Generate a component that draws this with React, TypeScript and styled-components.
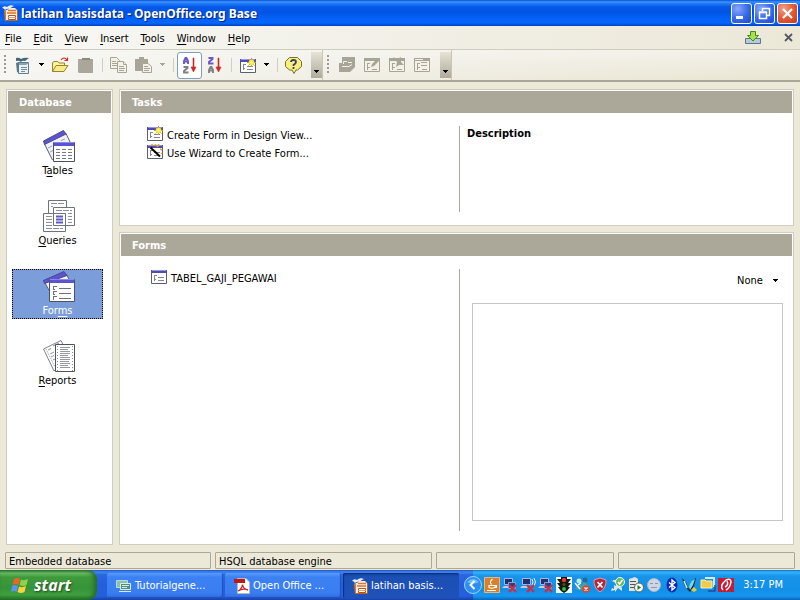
import React from "react";
import styled, { createGlobalStyle, css } from "styled-components";

const ui = `"DejaVu Sans Condensed", "Noto Sans", sans-serif`;

const Global = createGlobalStyle`
  * { box-sizing: border-box; }
  body { margin: 0; font-family: ${ui}; font-size: 11px; line-height: 14px; color: #000; background: #ece9d8; }
  button, select { font: inherit; color: inherit; border: 0; background: none; padding: 0; margin: 0; }
  u { text-underline-offset: 2px; }
  svg { display: block; flex: none; }
`;

/* ---------- layout ---------- */

const Screen = styled.div`
  min-height: 100vh;
  display: flex;
  flex-direction: column;
  background: #ece9d8;
`;

const TitleBar = styled.header`
  display: flex;
  align-items: center;
  height: 26px;
  padding: 0 2px;
  gap: 3px;
  background: linear-gradient(#0a52d8 0, #3a93ff 2px, #1c76f6 4px, #0558e8 7px, #0054e3 12px, #0463fa 19px, #0466fb 23px, #0040c0 26px);
`;

const Title = styled.h1`
  flex: 1;
  margin: 0;
  font-family: "Noto Sans", sans-serif;
  font-size: 12px;
  line-height: 20px;
  padding-top: 1px;
  font-weight: 700;
  color: #fff;
  text-shadow: 1px 1px 1px #0a1e7a;
  white-space: nowrap;
`;

const WindowButtons = styled.div`
  display: flex;
  gap: 2px;
`;

const WindowButton = styled.button<{ $close?: boolean }>`
  display: grid;
  place-items: center;
  width: 21px;
  height: 21px;
  border: 1px solid #fff;
  border-radius: 3px;
  background: ${(p) =>
    p.$close
      ? "radial-gradient(circle at 30% 25%, #f0a088, #e25b36 50%, #c13c14)"
      : "radial-gradient(circle at 30% 25%, #88a8f8, #3c6ce8 50%, #1c48d0)"};
`;

const MenuBar = styled.nav`
  display: flex;
  align-items: center;
  height: 24px;
  padding: 0 7px 0 5px;
  gap: 12px;
  border-bottom: 1px solid #cfccbe;
  background: linear-gradient(90deg, #f7f7f5, #ece8d8);
`;

const MenuItem = styled.button`
  padding-top: 2px;
  line-height: 18px;
`;

const MenuSpacer = styled.div`
  flex: 1;
`;

const IconButton = styled.button`
  display: grid;
  place-items: center;
  margin-left: 11px;
`;

const ToolBars = styled.div`
  display: flex;
  height: 32px;
  border-bottom: 2px solid #aaa798;
  background: linear-gradient(90deg, rgba(247, 247, 245, 0.9), rgba(236, 232, 216, 0)),
    linear-gradient(#f3f1e8, #e9e5d2);
`;

const ToolGroup = styled.div`
  display: flex;
  align-items: center;
  border-right: 1px solid #c9c6b6;
`;

const Grip = styled.div<{ $wide?: boolean }>`
  width: ${(p) => (p.$wide ? 12 : 10)}px;
  height: 20px;
  padding-left: 4px;

  &::before {
    content: "";
    display: block;
    width: 2px;
    height: 100%;
    background: repeating-linear-gradient(#9c998d 0 2px, transparent 2px 4px);
  }
`;

const Tool = styled.button<{ $active?: boolean }>`
  display: grid;
  place-items: center;
  width: 25px;
  height: 27px;
  ${(p) =>
    p.$active &&
    css`
      background: #fff;
      border: 1px solid #7f9dbd;
      border-radius: 3px;
    `}
`;

const ToolArrow = styled.button`
  display: grid;
  place-items: center;
  width: 13px;
  height: 27px;
`;

const Separator = styled.div`
  width: 1px;
  height: 14px;
  margin: 0 3px 0 4px;
  background: #d2cebf;
`;

const Overflow = styled.button`
  display: flex;
  align-items: flex-end;
  justify-content: center;
  width: 11px;
  height: 26px;
  margin-left: 5px;
  padding-bottom: 4px;
  background: linear-gradient(#e6e3d6, #aeab9c);
`;

const Workspace = styled.main`
  flex: 1;
  display: flex;
  gap: 6px;
  padding: 7px 6px 0 6px;
`;

const Panel = styled.section`
  display: flex;
  flex-direction: column;
  border: 1px solid #d0cdc0;
  padding: 1px;
  background: #fff;
`;

const Sidebar = styled(Panel)`
  width: 107px;
`;

const Column = styled.div`
  flex: 1;
  min-width: 0;
  display: grid;
  grid-template-rows: 137px 1fr;
  gap: 6px;
`;

const PanelTitle = styled.h2`
  margin: 0;
  padding: 2px 11px 0;
  font-size: 11px;
  line-height: 20px;
  font-weight: 700;
  color: #fff;
  background: #aca899;
`;

const Categories = styled.nav`
  display: flex;
  flex-direction: column;
  gap: 20px;
  padding: 16px 8px 0 4px;
`;

const Category = styled.button<{ $selected?: boolean }>`
  display: flex;
  flex-direction: column;
  align-items: center;
  justify-content: flex-end;
  gap: 2px;
  height: 50px;
  padding-left: 3px;
  border: 1px solid transparent;
  ${(p) =>
    p.$selected &&
    css`
      color: #fff;
      background: #7b9edb;
      border: 1px dotted #000;
    `}
`;

const CategoryLabel = styled.span`
  margin-right: 3px;
`;

const Split = styled.div`
  flex: 1;
  display: grid;
  grid-template-columns: 338fr 333fr;
  padding: 13px 0 12px;
`;

const ItemList = styled.div<{ $indent: number }>`
  display: flex;
  flex-direction: column;
  align-items: flex-start;
  padding-left: ${(p) => p.$indent}px;
`;

const Item = styled.button`
  display: flex;
  align-items: flex-start;
  gap: 4px;
  height: 18px;
  line-height: 19px;
  white-space: nowrap;
`;

const Detail = styled.div`
  display: flex;
  flex-direction: column;
  border-left: 1px solid #aca899;
  padding-left: 7px;
`;

const DetailTitle = styled.h3`
  margin: 0;
  font-size: 11px;
  line-height: 15px;
  font-weight: 700;
`;

const Preview = styled(Detail)`
  padding: 0 9px 10px 12px;
`;

const PreviewMode = styled.label`
  display: grid;
  align-self: flex-end;
  align-items: center;
  width: 46px;
  height: 24px;

  > * {
    grid-area: 1 / 1;
  }

  svg {
    justify-self: end;
    margin-right: 4px;
    pointer-events: none;
  }
`;

const ModeSelect = styled.select`
  appearance: none;
  width: 100%;
  background: transparent;
  outline: none;
`;

const PreviewBox = styled.div`
  flex: 1;
  margin-top: 10px;
  border: 1px solid #c6c6c6;
`;

const StatusBar = styled.footer`
  display: grid;
  grid-template-columns: 206fr 217fr 178fr 177fr;
  gap: 4px;
  padding: 7px 5px 1px;
`;

const StatusCell = styled.div`
  height: 17px;
  padding: 2px 3px 0;
  border: 1px solid #aca899;
  border-radius: 1px;
`;

const TaskBar = styled.nav`
  display: flex;
  height: 30px;
  background: linear-gradient(#1f4fc0 0, #3f86f2 2px, #2a66e0 5px, #245edb 15px, #2460dd 26px, #1941a5 30px);
`;

const StartButton = styled.button`
  display: flex;
  align-items: center;
  gap: 5px;
  width: 97px;
  padding-left: 11px;
  border-radius: 0 9px 9px 0;
  background: linear-gradient(#2d7a2d 0, #6fbf6a 3px, #3f9a3c 7px, #37933a 18px, #3fa03e 25px, #256f28 30px);
  box-shadow: inset -3px 0 5px #226b26;
`;

const StartLabel = styled.span`
  font-family: "Open Sans", sans-serif;
  font-size: 16px;
  line-height: 22px;
  font-style: italic;
  font-weight: 700;
  color: #fff;
  text-shadow: 1px 1px 2px #1c4a1c;
`;

const Tasks = styled.div`
  flex: 1;
  display: flex;
  gap: 2px;
  padding: 3px 10px 2px 10px;
`;

const Task = styled.button<{ $active?: boolean }>`
  flex: 0 1 116px;
  min-width: 0;
  display: flex;
  align-items: center;
  gap: 3px;
  padding-left: 9px;
  border-radius: 2px;
  color: #fff;
  white-space: nowrap;
  background: ${(p) =>
    p.$active
      ? "linear-gradient(#153f96, #1c4fb4 4px, #1e52b9)"
      : "linear-gradient(#5a9bff, #3c81f3 4px, #3a7df0 20px, #2f6de0)"};
  box-shadow: ${(p) => (p.$active ? "inset 1px 1px 1px #0f2f78" : "inset -1px -1px 1px #1d4fc0")};
`;

const Tray = styled.div`
  display: flex;
  align-items: center;
  gap: 2px;
  padding-right: 17px;
  color: #fff;
  background: linear-gradient(#0b6bc8 0, #34b4f6 2px, #1894ea 6px, #1290e8 20px, #1698f0 26px, #0c63b8 30px);
`;

const TrayToggle = styled.button`
  width: 18px;
  height: 18px;
  margin-left: -9px;
`;

const Clock = styled.time`
  margin-left: 7px;
`;

/* ---------- icons ---------- */

const Pic = ({ w = 16, h = w, children }: { w?: number; h?: number; children: React.ReactNode }) => (
  <svg width={w} height={h} viewBox={`0 0 ${w} ${h}`} aria-hidden="true">
    {children}
  </svg>
);

const Arrow = ({ color = "#000" }: { color?: string }) => (
  <Pic w={7} h={4}>
    <path d="M1 0H6V1H5V2H4V3H3V2H2V1H1Z" fill={color} />
  </Pic>
);

const BaseLogo = () => (
  <Pic>
    <path d="M0 3Q2 0 5 2Q8 -1 12 1Q9 2 8 4Q5 3 3 5Q2 3 0 3Z" fill="#e9eef6" />
    <path d="M2 6L9 3H13L15 5V16H4V8Z" fill="#fbeee0" />
    <path d="M2 6L4 5V16H3Z" fill="#d9772e" />
    <path d="M6 5.500H14M5 8H14" stroke="#d9772e" strokeWidth="1.500" />
    <path d="M6.500 10.500H13.500V14.500H6.500Z" fill="#fff" stroke="#b4551d" />
    <path d="M6 12.500H14" stroke="#e0a070" />
    <path d="M4 15.500H15.500V5" fill="none" stroke="#c06020" />
  </Pic>
);

const Minimize = () => (
  <Pic w={15}>
    <path d="M2 10H9V13H2Z" fill="#fff" />
  </Pic>
);
const Restore = () => (
  <Pic w={15}>
    <path d="M5.500 5V2.500H12.500V9.500H10M5 2.500H13M2.500 6.500H9.500V12.500H2.500ZM2 6H10" fill="none" stroke="#fff" strokeWidth="1.500" />
  </Pic>
);
const Close = () => (
  <Pic w={15}>
    <path d="M3 3L12 12M12 3L3 12" stroke="#fff" strokeWidth="2.200" />
  </Pic>
);

const Download = () => (
  <Pic w={16} h={13}>
    <path d="M0.500 7.500H15.500V12.500H0.500Z" fill="#b4cbd8" stroke="#5c7888" />
    <path d="M5.500 0.500H10.500V4.500H13.500L8 10L2.500 4.500H5.500Z" fill="#a8e04c" stroke="#3f8f1c" />
  </Pic>
);
const CloseDoc = () => (
  <Pic w={9}>
    <path d="M1 1L8 8M8 1L1 8" stroke="#555964" strokeWidth="1.800" />
  </Pic>
);

const NewDoc = () => (
  <Pic w={16} h={17}>
    <path d="M3.500 5.500H13.500V16.500H3.500Z" fill="#e9f2f6" stroke="#5d7f90" />
    <path d="M1 1Q4 0 6 2Q9 0 14 1L10 4Q7 3 6 5Q4 3 1 4Z" fill="#41687c" />
    <path d="M1 6L4 5V16L2 15Z" fill="#56798a" />
    <path d="M4 6H14L11 8H4Z" fill="#87a4b0" />
    <path d="M6 10.500H12M6 12.500H12M6 14.500H10" stroke="#6d8f9e" />
  </Pic>
);
const Open = () => (
  <Pic w={17} h={16}>
    <path d="M0.500 14.500V5.500L2 4.500H6L7 6H12.500V8" fill="#fff3a0" stroke="#98852c" />
    <path d="M0.500 14.500L4 8.500H16L12 14.500Z" fill="#f8ec88" stroke="#98852c" />
    <path d="M9 3Q12 -1 15 3M12.500 3.500H15.500V0.500" fill="none" stroke="#d22c2c" strokeWidth="1.200" />
  </Pic>
);
const Save = () => (
  <Pic w={15}>
    <path d="M0 1H15V15H1L0 14Z" fill="#aaa69a" />
    <path d="M4 0H12V2H4Z" fill="#8d897c" />
  </Pic>
);
const Copy = () => (
  <Pic w={17} h={16}>
    <g fill="#f3f1e8" stroke="#a8a498">
      <path d="M0.500 0.500H6.500L9.500 3.500V11.500H0.500Z" />
      <path d="M2 4.500H6M2 6.500H7M2 8.500H7" />
      <path d="M7.500 4.500H13.500L16.500 7.500V15.500H7.500Z" />
      <path d="M13.500 4.500V7.500H16.500M9 9.500H14M9 11.500H15M9 13.500H14" />
    </g>
  </Pic>
);
const Paste = () => (
  <Pic w={17} h={16}>
    <path d="M0 2H4V0H9V2H13V14H0Z" fill="#a8a498" />
    <path d="M7.500 6.500H13L16.500 9.500V15.500H7.500Z" fill="#f3f1e8" stroke="#a8a498" />
    <path d="M9 9.500H13M9 11.500H15M9 13.500H14" stroke="#a8a498" />
  </Pic>
);
const LetterA = ({ x, y, c }: { x: number; y: number; c: string }) => (
  <path transform={`translate(${x} ${y})`} d="M1 7V4L2.500 1H3.500L5 4V7M1 4.500H5" fill="none" stroke={c} strokeWidth="1.900" />
);
const LetterZ = ({ x, y, c }: { x: number; y: number; c: string }) => (
  <path transform={`translate(${x} ${y})`} d="M0.500 1H4.500V2L1 5V6.500H5.500" fill="none" stroke={c} strokeWidth="1.900" />
);
const Sort = ({ desc }: { desc?: boolean }) => (
  <Pic w={15} h={17}>
    {desc ? <LetterZ x={1} y={0} c="#6a58c8" /> : <LetterA x={1} y={0} c="#6a58c8" />}
    {desc ? <LetterA x={1} y={9} c="#808086" /> : <LetterZ x={1} y={9} c="#808086" />}
    <path d="M11 1H12V10H14L11.500 15L9 10H11Z" fill="#d02626" stroke="#d02626" strokeWidth="0.600" />
  </Pic>
);

const FormPic = ({ spark, wand }: { spark?: boolean; wand?: boolean }) => (
  <Pic w={16} h={15}>
    <path d="M0.500 1.500H15.500V14.500H0.500Z" fill="#fff" stroke="#5a6072" />
    <path d="M0 1H16V4H0Z" fill="#4f4bb0" />
    <path d="M1 1.500H15" stroke="#9a98dc" />
    <path d="M3.500 6V12M3 6.500H6M3 10.500H5M7 8.500H13M7 11.500H13" stroke="#858590" />
    {spark && (
      <>
        <path d="M11.500 0V9M7 4.500H16M8.500 1.500L14.500 7.500M14.500 1.500L8.500 7.500" stroke="#b8a420" />
        <circle cx="11.500" cy="4.500" r="2.800" fill="#f6e83c" />
        <circle cx="11.500" cy="4.500" r="1" fill="#fffcc0" />
      </>
    )}
    {wand && (
      <>
        <path d="M3.500 3.500L13 12.500" stroke="#000" strokeWidth="2" />
        <path d="M5 0V2M8 0L9 2M12 0L10 3M13 5L15 6M14 9L15 10" stroke="#e8a018" strokeWidth="1.500" />
      </>
    )}
  </Pic>
);

const Help = () => (
  <Pic w={17} h={17}>
    <path d="M4.500 0.500H12.500L16.500 4.500V9.500L12.500 13H11L9 16.500L7 13H4.500L0.500 9.500V4.500Z" fill="#f8f07c" stroke="#75702c" />
    <path d="M6 5Q6 3 8.500 3Q11 3 11 5Q11 6.500 8.500 8V9M8.500 10V12" fill="none" stroke="#3c3c6c" strokeWidth="1.800" />
  </Pic>
);

const GrayForm = ({ kind }: { kind: "open" | "edit" | "delete" | "rename" }) => (
  <Pic w={17} h={16}>
    {kind === "open" ? (
      <>
        <path d="M3 0H16V10L11 15H0V6H3Z" fill="#a8a498" />
        <path d="M4.500 7V4.500H8M9 5.500H13M3 9.500H10L13 7.500" fill="none" stroke="#f3f1e8" />
      </>
    ) : (
      <>
        <path d="M0.500 1.500H15.500V14.500H0.500Z" fill="#f3f1e8" stroke="#a8a498" />
        <path d="M0 1H16V4H0Z" fill="#a8a498" />
        <path d="M3.500 6V13M3 6.500H6M3 10.500H6M8 12.500H13" stroke="#a8a498" />
        {kind === "edit" && <path d="M7 10L8 7L14 1L16 3L10 9Z" fill="#a8a498" />}
        {kind === "delete" && <path d="M4 0L8 2L12 0V5L15 8L10 8L7 10L8 5Z" fill="#a8a498" />}
        {kind === "rename" && <path d="M1 2.500H9M7 7.500H13M7 10.500H13" stroke="#f3f1e8" />}
        {kind === "rename" && <path d="M7 8.500H13M7 5.500H13" stroke="#a8a498" />}
      </>
    )}
  </Pic>
);

const TablesPic = () => (
  <Pic w={33} h={32}>
    <path d="M1.500 14L22.500 4L27 13L10 30Z" fill="#f0f2fa" />
    <path d="M1.500 14L9.500 30M23 3.500L27 12" stroke="#5a5e6c" />
    <path d="M5 18L9 16M7 22L10 20.500M12 14.500L16 12.500M18 10.500L22 9" stroke="#9a9eac" />
    <path d="M0.500 11L20.500 0.500L23 4L1.500 14.500Z" fill="#5b54cc" stroke="#4a4498" />
    <path d="M10.500 12.500H31.500V31.500H10.500Z" fill="#fff" stroke="#4c5168" />
    <path d="M11 12H31V16H11Z" fill="#5b54cc" />
    <path d="M11 12.500H31" stroke="#8d88e4" />
    <path d="M13 19.500H30M13 22.500H30M13 25.500H30M13 28.500H30" stroke="#777b85" strokeDasharray="4 2" />
  </Pic>
);
const QueriesPic = () => (
  <Pic w={33} h={32}>
    <g fill="#fff" stroke="#6e737c">
      <path d="M5.500 0.500H23.500V16.500H5.500Z" />
      <path d="M10.500 7.500H31.500V25.500H10.500Z" />
      <path d="M0.500 13.500H22.500V31.500H0.500Z" />
      <path d="M10.500 13.500H22.500V25.500H10.500Z" />
    </g>
    <path d="M8 3.500H21M8 6.500H10M13 10.500H29M25 13.500H29M25 16.500H29M25 19.500H29M25 22.500H29M3 16.500H9M3 19.500H9M3 22.500H9M3 25.500H9M3 28.500H20" stroke="#8b8f98" strokeDasharray="6 1" />
    <path d="M13 16.500H20M13 19.500H20M13 22.500H20" stroke="#5b5ac0" strokeWidth="2" />
  </Pic>
);
const FormsPic = () => (
  <Pic w={33} h={32}>
    <path d="M1.500 12L22.500 3L27 12L8 24Z" fill="#f0f2fa" />
    <path d="M2 13L6.500 21M23.500 4.500L26 9" stroke="#5a5e6c" />
    <path d="M0.500 10.500L21 1.500L24 5.500L1.500 13.500Z" fill="#5b54cc" stroke="#4a4498" />
    <path d="M6.500 9.500H31.500V31.500H6.500Z" fill="#fff" stroke="#4c5168" />
    <path d="M7 9H31V13H7Z" fill="#5b54cc" />
    <path d="M7 9.500H31" stroke="#8d88e4" />
    <path d="M10.500 16V20M10 16.500H14M10 19.500H12M10.500 21V25M10 21.500H14M10 24.500H12M10.500 26V30M10 26.500H14M16 18.500H28M16 23.500H28M16 28.500H28" stroke="#6d717c" />
  </Pic>
);
const ReportsPic = () => (
  <Pic w={33} h={32}>
    <path d="M0.500 9L18 0.500L26 17L11 31Z" fill="#fff" stroke="#7e828c" />
    <path d="M3 9L12 27" stroke="#90949c" strokeDasharray="1 1" />
    <path d="M5 10L8 8.500M7 14L11 12M8 17L11 15.500M10 20L12 19M10 6L16 3" stroke="#90949c" />
    <path d="M12.500 4.500H31.500V31.500H12.500Z" fill="#fff" stroke="#4f535d" />
    <path d="M14.500 6V31M29.500 6V31" stroke="#8b8f98" strokeDasharray="1 2" />
    <path d="M17 7.500H27M17 9.500H25M17 11.500H27M17 13.500H27M17 15.500H25M17 17.500H27M17 19.500H27M17 21.500H26M17 23.500H27M17 25.500H25M17 27.500H27" stroke="#959aa3" />
  </Pic>
);

const WindowsFlag = () => (
  <Pic w={18} h={17}>
    <path d="M3 2Q6 0 9 2L7.500 8Q5 6 1.500 8Z" fill="#f2602c" />
    <path d="M10 2.500Q13 4 17 2L15.500 8Q12 10 8.500 8Z" fill="#8fd24a" />
    <path d="M1 9Q4 7 7 9L5.500 15Q3 13 0 15Z" fill="#5c94f4" />
    <path d="M8 9.500Q11 11 15 9L13.500 15Q10 17 6.500 15Z" fill="#fbd13c" />
  </Pic>
);
const NetDrive = () => (
  <Pic>
    <path d="M0.500 2.500H11.500V9.500H0.500Z" fill="#86c2b0" stroke="#b8dcd4" />
    <path d="M4.500 5.500H14.500V11.500H4.500Z" fill="#4a9080" stroke="#dcecec" />
    <path d="M6 7.500H13M6 9.500H11M3 13.500H15" stroke="#dcebe4" />
  </Pic>
);
const Pdf = () => (
  <Pic>
    <path d="M3.500 0.500H12L15.500 4V15.500H3.500Z" fill="#fff" stroke="#b8b8b8" />
    <path d="M0 1H11V5H0Z" fill="#c01818" />
    <path d="M4 13Q8 11 8.500 6.500Q9 11 14 12Q9 10 4 13Z" fill="none" stroke="#d02424" strokeWidth="1.300" />
  </Pic>
);

const Chevron = () => (
  <Pic w={18}>
    <circle cx="9" cy="9" r="8.500" fill="#2c8ef0" stroke="#9fd6ff" />
    <path d="M3 6Q9 0 15 6Q9 9 3 6Z" fill="#74bcfa" />
    <path d="M10.500 5L6.500 9L10.500 13" fill="none" stroke="#fff" strokeWidth="2" />
  </Pic>
);

const Computers = ({ waves }: { waves?: boolean }) => (
  <>
    <path d="M2.500 1.500H10.500V7.500H2.500Z" fill="#1e2f74" stroke="#a9b8de" />
    <path d="M0 11H7L9 9H2Z" fill="#c3cbe2" />
    {waves ? (
      <path d="M12 2Q14 5 12 8M14 1Q17 5 14 9" fill="none" stroke="#e4f0ff" />
    ) : (
      <path d="M6.500 5.500H13.500V11.500H6.500Z" fill="#2a3d8a" stroke="#8f9fce" />
    )}
    <path d="M7 8L14 15M14 8L7 15" stroke="#c83048" strokeWidth="2.400" />
  </>
);

const trayIcons: { name: string; art: React.ReactNode }[] = [
  {
    name: "Java update",
    art: (
      <>
        <path d="M0.500 0.500H15.500V15.500H0.500Z" fill="#d8802c" stroke="#f0b478" />
        <path d="M8.500 2Q5 5 7.500 7.500M5 8.500H11V10.500Q8 12 5 10.500ZM11 8.500H12.500V10.500H11M3 13.500H12" fill="none" stroke="#fff" strokeWidth="1.100" />
      </>
    ),
  },
  { name: "Network disconnected", art: <Computers /> },
  { name: "Wireless disconnected", art: <Computers waves /> },
  { name: "Connection disconnected", art: <Computers /> },
  {
    name: "Traffic light",
    art: (
      <>
        <path d="M0 0H16V16H0Z" fill="#f4f8f4" />
        <path d="M5 0H11V2H15L12 6H15L12 10H14L11 14L8 16L5 14L2 10H4L1 6H4L1 2H5Z" fill="#10180f" />
        <circle cx="8" cy="3" r="2.200" fill="#e43838" />
        <circle cx="8" cy="7.500" r="1.600" fill="#5c4810" />
        <circle cx="8" cy="12" r="2" fill="#34b848" />
      </>
    ),
  },
  {
    name: "Messenger",
    art: (
      <>
        <circle cx="5" cy="4" r="2.500" fill="#c8e8d0" />
        <circle cx="11" cy="3" r="2.500" fill="#286c8c" />
        <path d="M1 12Q3 6 8 8L10 5L14 8V13H4Z" fill="#4f9ca8" />
        <path d="M1 6L6 12M4 8L7 6" stroke="#e8f8f0" strokeWidth="1.500" />
        <circle cx="12" cy="12" r="3.800" fill="#d84a28" />
        <path d="M10.500 10.500L13.500 13.500M13.500 10.500L10.500 13.500" stroke="#fff" strokeWidth="1.300" />
      </>
    ),
  },
  {
    name: "Security alert",
    art: (
      <>
        <path d="M8 1L14 3Q14.500 11 8 15Q1.500 11 2 3Z" fill="#b82438" stroke="#e89aa8" />
        <path d="M5.500 5L10.500 10.500M10.500 5L5.500 10.500" stroke="#fff" strokeWidth="1.800" />
      </>
    ),
  },
  {
    name: "Safely remove",
    art: (
      <>
        <path d="M1 3L3 5V3H6V9L4 8V12L2 11L1 14L5 13V15L8 11L12 14V11L10 9Z" fill="#dfe6e2" />
        <circle cx="10" cy="5" r="4.500" fill="#68bc5a" stroke="#eef8ec" />
        <path d="M8 5L9.500 7L12.500 3" fill="none" stroke="#fff" strokeWidth="1.500" />
      </>
    ),
  },
  {
    name: "Server",
    art: (
      <>
        <path d="M1 2L7 0L10 2V14H1Z" fill="#e4e4dc" />
        <path d="M2 4.500H8M2 7.500H8M2 10.500H6" stroke="#54584c" />
        <circle cx="11" cy="10.500" r="4.500" fill="#fff" stroke="#446044" />
        <path d="M9.500 8L13 10.500L9.500 13Z" fill="#1e7c28" />
      </>
    ),
  },
  {
    name: "Status",
    art: (
      <>
        <circle cx="8" cy="8" r="6.500" fill="#cfd6e2" stroke="#aab6ca" />
        <path d="M4 6.500H7M9 6.500H12M5 10.500H11" stroke="#8c98b0" />
      </>
    ),
  },
  {
    name: "Bluetooth",
    art: (
      <>
        <ellipse cx="8" cy="8" rx="5.500" ry="7.500" fill="#0b2cb4" />
        <path d="M5 5.500L11 10.500L8 13V3L11 5.500L5 10.500" fill="none" stroke="#fff" strokeWidth="1.300" />
      </>
    ),
  },
  {
    name: "Antivirus",
    art: (
      <>
        <path d="M0 1Q5 5 6 12L9 7Q11 2 14 1L12 9L8 15Q2 10 0 1Z" fill="#142a38" />
        <path d="M7 10Q9 3 13 2L11 8L8 13Z" fill="#7fd8d8" />
        <path d="M2 4L5 11" stroke="#dbeef0" strokeWidth="1.500" />
        <path d="M9 13L12 10L15 13L12 15Z" fill="#e4cc30" />
      </>
    ),
  },
  {
    name: "Folder sync",
    art: (
      <>
        <path d="M5 1H14V10" fill="none" stroke="#d8e8f8" strokeWidth="2" />
        <path d="M15 8V14H8" fill="none" stroke="#1c4c98" strokeWidth="1.500" />
        <path d="M1 3H5L6 4H12V11H1Z" fill="#f2cc48" stroke="#fff0b0" />
      </>
    ),
  },
  {
    name: "Avira",
    art: (
      <>
        <path d="M0 1H16V15H0Z" fill="#c41c34" />
        <path d="M5 13Q1 9 8 3Q13 1 13 5Q12 11 8 13M9 4Q11 8 7 10" fill="none" stroke="#fff" strokeWidth="1.500" />
      </>
    ),
  },
];

/* ---------- data ---------- */

const menus: [string, string, string][] = [
  ["", "F", "ile"],
  ["", "E", "dit"],
  ["", "V", "iew"],
  ["", "I", "nsert"],
  ["", "T", "ools"],
  ["", "W", "indow"],
  ["", "H", "elp"],
];

const categories: { label: [string, string, string]; icon: React.ReactNode; selected?: boolean }[] = [
  { label: ["T", "a", "bles"], icon: <TablesPic /> },
  { label: ["", "Q", "ueries"], icon: <QueriesPic /> },
  { label: ["For", "m", "s"], icon: <FormsPic />, selected: true },
  { label: ["", "R", "eports"], icon: <ReportsPic /> },
];

const Mnemonic = ({ parts }: { parts: [string, string, string] }) => (
  <>
    {parts[0]}
    <u>{parts[1]}</u>
    {parts[2]}
  </>
);

export default function App() {
  return (
    <Screen>
      <Global />
      <TitleBar>
        <BaseLogo />
        <Title>latihan basisdata - OpenOffice.org Base</Title>
        <WindowButtons>
          <WindowButton aria-label="Minimize"><Minimize /></WindowButton>
          <WindowButton aria-label="Restore"><Restore /></WindowButton>
          <WindowButton $close aria-label="Close"><Close /></WindowButton>
        </WindowButtons>
      </TitleBar>

      <MenuBar>
        {menus.map((m) => (
          <MenuItem key={m.join("")}><Mnemonic parts={m} /></MenuItem>
        ))}
        <MenuSpacer />
        <IconButton aria-label="Download updates"><Download /></IconButton>
        <IconButton aria-label="Close document"><CloseDoc /></IconButton>
      </MenuBar>

      <ToolBars>
        <ToolGroup>
          <Grip />
          <Tool aria-label="New"><NewDoc /></Tool>
          <ToolArrow aria-label="New options"><Arrow /></ToolArrow>
          <Tool aria-label="Open"><Open /></Tool>
          <Tool aria-label="Save"><Save /></Tool>
          <Separator />
          <Tool aria-label="Copy"><Copy /></Tool>
          <Tool aria-label="Paste"><Paste /></Tool>
          <ToolArrow aria-label="Paste options"><Arrow color="#a8a498" /></ToolArrow>
          <Separator />
          <Tool $active aria-label="Sort ascending"><Sort /></Tool>
          <Tool aria-label="Sort descending"><Sort desc /></Tool>
          <Separator />
          <Tool aria-label="Form"><FormPic spark /></Tool>
          <ToolArrow aria-label="Form options"><Arrow /></ToolArrow>
          <Separator />
          <Tool aria-label="Help"><Help /></Tool>
          <Overflow aria-label="More standard tools"><Arrow /></Overflow>
        </ToolGroup>
        <ToolGroup>
          <Grip $wide />
          <Tool aria-label="Open form"><GrayForm kind="open" /></Tool>
          <Tool aria-label="Edit form"><GrayForm kind="edit" /></Tool>
          <Tool aria-label="Delete form"><GrayForm kind="delete" /></Tool>
          <Tool aria-label="Rename form"><GrayForm kind="rename" /></Tool>
          <Overflow aria-label="More form tools"><Arrow /></Overflow>
        </ToolGroup>
      </ToolBars>

      <Workspace>
        <Sidebar>
          <PanelTitle>Database</PanelTitle>
          <Categories>
            {categories.map((c) => (
              <Category key={c.label.join("")} $selected={c.selected}>
                {c.icon}
                <CategoryLabel><Mnemonic parts={c.label} /></CategoryLabel>
              </Category>
            ))}
          </Categories>
        </Sidebar>

        <Column>
          <Panel>
            <PanelTitle>Tasks</PanelTitle>
            <Split>
              <ItemList $indent={26}>
                <Item><FormPic spark />Create Form in Design View...</Item>
                <Item><FormPic wand />Use Wizard to Create Form...</Item>
              </ItemList>
              <Detail>
                <DetailTitle>Description</DetailTitle>
              </Detail>
            </Split>
          </Panel>
          <Panel>
            <PanelTitle>Forms</PanelTitle>
            <Split>
              <ItemList $indent={30}>
                <Item><FormPic />TABEL_GAJI_PEGAWAI</Item>
              </ItemList>
              <Preview>
                <PreviewMode>
                  <ModeSelect aria-label="Preview mode" defaultValue="None">
                    <option>None</option>
                    <option>Document</option>
                  </ModeSelect>
                  <Arrow />
                </PreviewMode>
                <PreviewBox />
              </Preview>
            </Split>
          </Panel>
        </Column>
      </Workspace>

      <StatusBar>
        <StatusCell>Embedded database</StatusCell>
        <StatusCell>HSQL database engine</StatusCell>
        <StatusCell />
        <StatusCell />
      </StatusBar>

      <TaskBar>
        <StartButton>
          <WindowsFlag />
          <StartLabel>start</StartLabel>
        </StartButton>
        <Tasks>
          <Task><NetDrive />Tutorialgene...</Task>
          <Task><Pdf />Open Office ...</Task>
          <Task $active><BaseLogo />latihan basis...</Task>
        </Tasks>
        <Tray>
          <TrayToggle aria-label="Show hidden icons"><Chevron /></TrayToggle>
          {trayIcons.map((t) => (
            <Pic key={t.name}>{t.art}</Pic>
          ))}
          <Clock>3:17 PM</Clock>
        </Tray>
      </TaskBar>
    </Screen>
  );
}
